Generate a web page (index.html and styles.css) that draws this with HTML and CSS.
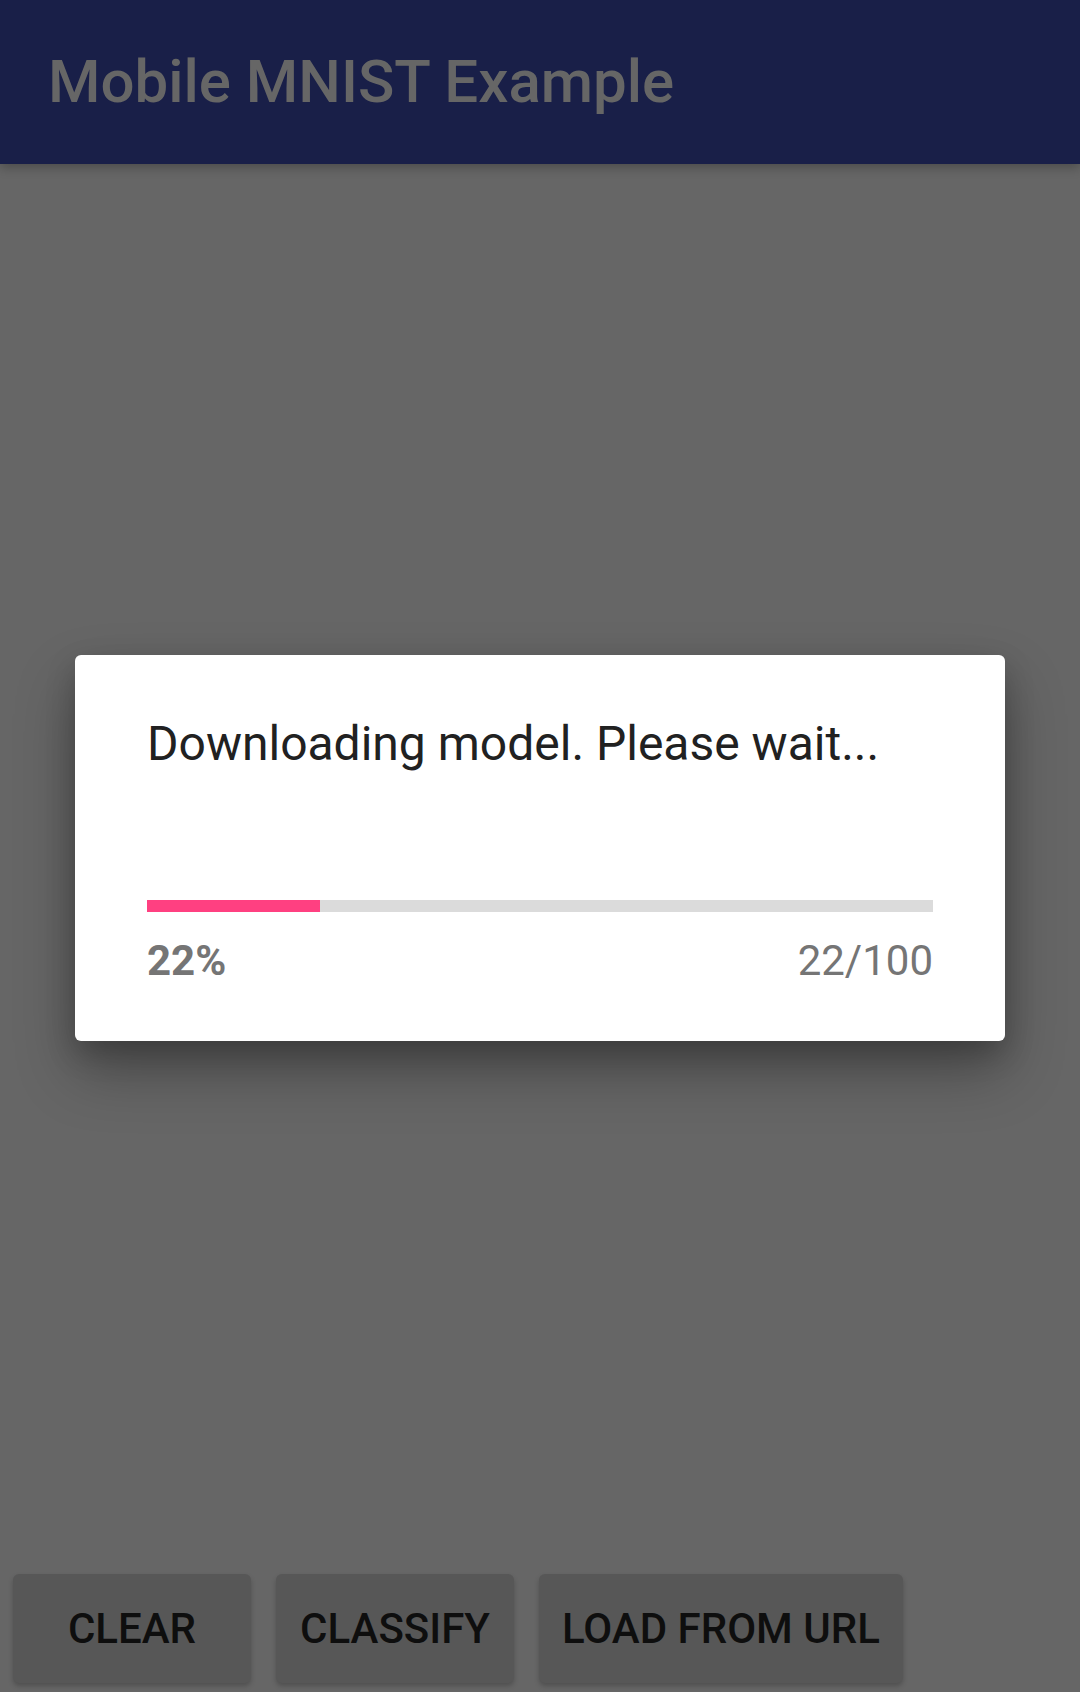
FILE: index.html
```html
<!DOCTYPE html>
<html>
<head>
<meta charset="utf-8">
<link rel="stylesheet" href="styles.css">
</head>
<body>
<div class="screen">
  <header class="appbar"><h1 class="title">Mobile MNIST Example</h1></header>
  <main class="canvas"></main>
  <div class="actions">
    <button class="btn">CLEAR</button>
    <button class="btn">CLASSIFY</button>
    <button class="btn">LOAD FROM URL</button>
  </div>
  <div class="overlay">
    <div class="dialog">
      <p class="message">Downloading model. Please wait...</p>
      <div class="track"><div class="fill" style="width:22%"></div></div>
      <div class="stats">
        <span class="percent">22%</span>
        <span class="count">22/100</span>
      </div>
    </div>
  </div>
</div>
</body>
</html>
```
FILE: styles.css
```css
html, body {
  margin: 0;
  padding: 0;
}
body {
  width: 1080px;
  height: 1692px;
  overflow: hidden;
  font-family: Roboto, "Noto Sans", sans-serif;
  background: #666666;
}
.screen {
  position: relative;
  width: 1080px;
  height: 1692px;
  display: flex;
  flex-direction: column;
  background: #666666;
}
.appbar {
  height: 164px;
  flex: 0 0 164px;
  background: #191f48;
  display: flex;
  align-items: center;
  padding-left: 48px;
  box-shadow: 0 4px 10px rgba(0, 0, 0, 0.25);
  position: relative;
  z-index: 1;
}
.title {
  margin: 0;
  font-size: 60px;
  font-weight: 500;
  line-height: 70px;
  color: #666666;
}
.canvas {
  flex: 1;
}
.actions {
  display: flex;
  gap: 25px;
  padding: 0 0 9px 13px;
}
.btn {
  font-family: Roboto, "Noto Sans", sans-serif;
  font-size: 42px;
  font-weight: 500;
  color: #0e0e0e;
  background: #575757;
  border: none;
  border-radius: 6px;
  height: 109px;
  min-width: 238px;
  padding: 0 23px;
  box-shadow: 0 3px 5px rgba(0, 0, 0, 0.22);
}
.overlay {
  position: absolute;
  inset: 0;
  display: flex;
  align-items: center;
  justify-content: center;
  padding-top: 4px;
  box-sizing: border-box;
  z-index: 2;
}
.dialog {
  width: 930px;
  box-sizing: border-box;
  background: #ffffff;
  border-radius: 6px;
  padding: 61px 72px 55px 72px;
  box-shadow: 0 30px 60px rgba(0, 0, 0, 0.3), 0 12px 30px rgba(0, 0, 0, 0.2);
}
.message {
  margin: 0;
  font-size: 48px;
  line-height: 56px;
  color: #212121;
}
.track {
  margin-top: 128px;
  height: 12px;
  background: #dbdbdb;
}
.fill {
  height: 100%;
  background: #ff4081;
}
.stats {
  margin-top: 24px;
  display: flex;
  justify-content: space-between;
  font-size: 42px;
  line-height: 50px;
  color: #757575;
}
.percent {
  font-weight: 700;
}
```
